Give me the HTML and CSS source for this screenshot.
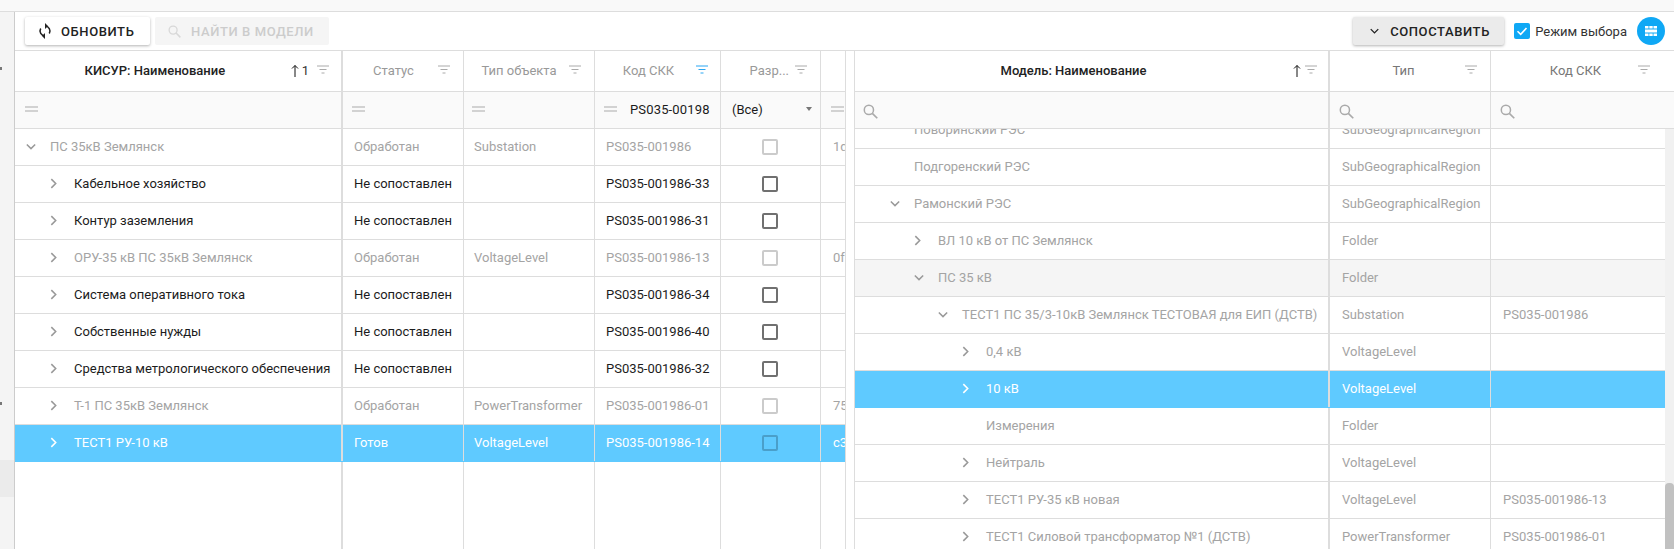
FILE: index.html
```html
<!DOCTYPE html>
<html lang="ru">

<head>
    <meta charset="UTF-8">
    <title>Сопоставление</title>
    <link rel="stylesheet" href="styles.css">
</head>

<body>
    <svg class="sprite" width="0" height="0">
        <symbol id="i-filter" viewBox="0 0 12 10">
            <path d="M0 1h12M2.500 4.500h7M4.500 8h3" fill="none" stroke="currentColor" stroke-width="1"/>
        </symbol>
        <symbol id="i-eq" viewBox="0 0 13 6">
            <path d="M0 1h13M0 5h13" fill="none" stroke="currentColor" stroke-width="1"/>
        </symbol>
        <symbol id="i-search" viewBox="0 0 14 14">
            <circle cx="5.500" cy="5.500" r="4.300" fill="none" stroke="currentColor" stroke-width="1.400"/>
            <path d="M8.700 8.700L13.300 13.300" fill="none" stroke="currentColor" stroke-width="1.600"/>
        </symbol>
        <symbol id="i-right" viewBox="0 0 8 12">
            <path d="M1.500 1L6.500 6L1.500 11" fill="none" stroke="currentColor" stroke-width="1.800"/>
        </symbol>
        <symbol id="i-down" viewBox="0 0 12 8">
            <path d="M1 1.500L6 6.500L11 1.500" fill="none" stroke="currentColor" stroke-width="1.800"/>
        </symbol>
        <symbol id="i-up" viewBox="0 0 8 13">
            <path d="M4 13V1.500M1 4.500L4 1.500L7 4.500" fill="none" stroke="currentColor" stroke-width="1"/>
        </symbol>
    </svg>

    <div class="top-strip"></div>

    <div class="main">
        <div class="side">
            <div class="side-mark first"></div>
            <div class="side-mark second"></div>
            <div class="side-active"></div>
        </div>

        <div class="content">
            <div class="toolbar">
                <button class="btn">
                    <svg class="btn-sync" viewBox="0 0 14 16" width="14" height="16">
                        <path d="M7 3a5 5 0 0 1 4.300 7.500M7 13a5 5 0 0 1-4.300-7.500" fill="none" stroke="#222" stroke-width="1.500"/>
                        <path d="M7 0l3 3-3 3zM7 10l-3 3 3 3z" fill="#222"/>
                    </svg>
                    Обновить
                </button>
                <button class="btn btn-off">
                    <svg class="icon-search" width="13" height="13"><use href="#i-search"/></svg>
                    Найти в модели
                </button>
                <div class="toolbar-right">
                    <button class="btn btn-match">
                        <svg width="9" height="6"><use href="#i-down"/></svg>
                        Сопоставить
                    </button>
                    <span class="check-box">
                        <svg viewBox="0 0 16 16" width="16" height="16">
                            <path d="M3.500 8.200L6.700 11.300L12.500 5" fill="none" stroke="#fff" stroke-width="1.600"/>
                        </svg>
                    </span>
                    <span class="check-label">Режим выбора</span>
                    <span class="round-btn">
                        <svg viewBox="0 0 12 12" width="12" height="12">
                            <path d="M0 1h3.500v2.500H0zM4.300 1h3.400v2.500H4.300zM8.500 1H12v2.500H8.500zM0 4.500h12v3H0zM0 8.500h3.500V11H0zM4.300 8.500h3.400V11H4.300zM8.500 8.500H12V11H8.500z" fill="#fff"/>
                        </svg>
                    </span>
                </div>
            </div>

            <div class="grids">
                <div class="grid grid-left">
                    <div class="row head">
                        <div class="cell c1 thick"><span class="title dark">КИСУР: Наименование</span><svg class="sort" width="8" height="13"><use href="#i-up"/></svg><span class="sort-num">1</span><svg class="flt" width="12" height="10"><use href="#i-filter"/></svg></div>
                        <div class="cell c2"><span class="title">Статус</span><svg class="flt" width="12" height="10"><use href="#i-filter"/></svg></div>
                        <div class="cell c3"><span class="title">Тип объекта</span><svg class="flt" width="12" height="10"><use href="#i-filter"/></svg></div>
                        <div class="cell c4"><span class="title">Код СКК</span><svg class="flt on" width="12" height="10"><use href="#i-filter"/></svg></div>
                        <div class="cell c5"><span class="title short">Разр...</span><svg class="flt" width="12" height="10"><use href="#i-filter"/></svg></div>
                        <div class="cell c6"></div>
                    </div>
                    <div class="row filter">
                        <div class="cell c1 thick"><svg class="eq" width="13" height="6"><use href="#i-eq"/></svg></div>
                        <div class="cell c2"><svg class="eq" width="13" height="6"><use href="#i-eq"/></svg></div>
                        <div class="cell c3"><svg class="eq" width="13" height="6"><use href="#i-eq"/></svg></div>
                        <div class="cell c4"><svg class="eq" width="13" height="6"><use href="#i-eq"/></svg><span class="filter-val">PS035-00198</span></div>
                        <div class="cell c5 sel"><span class="select-val">(Все)</span><span class="caret"></span></div>
                        <div class="cell c6"><svg class="eq" width="13" height="6"><use href="#i-eq"/></svg></div>
                    </div>
                    <div class="row muted">
                        <div class="cell c1 thick"><svg class="chev down" width="10" height="7"><use href="#i-down"/></svg>ПС 35кВ Землянск</div>
                        <div class="cell c2">Обработан</div>
                        <div class="cell c3">Substation</div>
                        <div class="cell c4">PS035-001986</div>
                        <div class="cell c5"><span class="box"></span></div>
                        <div class="cell c6">1d</div>
                    </div>
                    <div class="row">
                        <div class="cell c1 thick lvl-1"><svg class="chev" width="7" height="11"><use href="#i-right"/></svg>Кабельное хозяйство</div>
                        <div class="cell c2">Не сопоставлен</div>
                        <div class="cell c3"></div>
                        <div class="cell c4">PS035-001986-33</div>
                        <div class="cell c5"><span class="box"></span></div>
                        <div class="cell c6"></div>
                    </div>
                    <div class="row">
                        <div class="cell c1 thick lvl-1"><svg class="chev" width="7" height="11"><use href="#i-right"/></svg>Контур заземления</div>
                        <div class="cell c2">Не сопоставлен</div>
                        <div class="cell c3"></div>
                        <div class="cell c4">PS035-001986-31</div>
                        <div class="cell c5"><span class="box"></span></div>
                        <div class="cell c6"></div>
                    </div>
                    <div class="row muted">
                        <div class="cell c1 thick lvl-1"><svg class="chev" width="7" height="11"><use href="#i-right"/></svg>ОРУ-35 кВ ПС 35кВ Землянск</div>
                        <div class="cell c2">Обработан</div>
                        <div class="cell c3">VoltageLevel</div>
                        <div class="cell c4">PS035-001986-13</div>
                        <div class="cell c5"><span class="box"></span></div>
                        <div class="cell c6">0f</div>
                    </div>
                    <div class="row">
                        <div class="cell c1 thick lvl-1"><svg class="chev" width="7" height="11"><use href="#i-right"/></svg>Система оперативного тока</div>
                        <div class="cell c2">Не сопоставлен</div>
                        <div class="cell c3"></div>
                        <div class="cell c4">PS035-001986-34</div>
                        <div class="cell c5"><span class="box"></span></div>
                        <div class="cell c6"></div>
                    </div>
                    <div class="row">
                        <div class="cell c1 thick lvl-1"><svg class="chev" width="7" height="11"><use href="#i-right"/></svg>Собственные нужды</div>
                        <div class="cell c2">Не сопоставлен</div>
                        <div class="cell c3"></div>
                        <div class="cell c4">PS035-001986-40</div>
                        <div class="cell c5"><span class="box"></span></div>
                        <div class="cell c6"></div>
                    </div>
                    <div class="row">
                        <div class="cell c1 thick lvl-1"><svg class="chev" width="7" height="11"><use href="#i-right"/></svg>Средства метрологического обеспечения</div>
                        <div class="cell c2">Не сопоставлен</div>
                        <div class="cell c3"></div>
                        <div class="cell c4">PS035-001986-32</div>
                        <div class="cell c5"><span class="box"></span></div>
                        <div class="cell c6"></div>
                    </div>
                    <div class="row muted">
                        <div class="cell c1 thick lvl-1"><svg class="chev" width="7" height="11"><use href="#i-right"/></svg>Т-1 ПС 35кВ Землянск</div>
                        <div class="cell c2">Обработан</div>
                        <div class="cell c3">PowerTransformer</div>
                        <div class="cell c4">PS035-001986-01</div>
                        <div class="cell c5"><span class="box"></span></div>
                        <div class="cell c6">75</div>
                    </div>
                    <div class="row selected">
                        <div class="cell c1 thick lvl-1"><svg class="chev" width="7" height="11"><use href="#i-right"/></svg>ТЕСТ1 РУ-10 кВ</div>
                        <div class="cell c2">Готов</div>
                        <div class="cell c3">VoltageLevel</div>
                        <div class="cell c4">PS035-001986-14</div>
                        <div class="cell c5"><span class="box"></span></div>
                        <div class="cell c6">c3</div>
                    </div>
                    <div class="row rest">
                        <div class="cell c1 thick"></div>
                        <div class="cell c2"></div>
                        <div class="cell c3"></div>
                        <div class="cell c4"></div>
                        <div class="cell c5"></div>
                        <div class="cell c6"></div>
                    </div>
                </div>

                <div class="grid grid-right">
                    <div class="row head">
                        <div class="cell m1 thick"><span class="title dark">Модель: Наименование</span><svg class="sort" width="8" height="13"><use href="#i-up"/></svg><svg class="flt near" width="12" height="10"><use href="#i-filter"/></svg></div>
                        <div class="cell m2"><span class="title mid">Тип</span><svg class="flt" width="12" height="10"><use href="#i-filter"/></svg></div>
                        <div class="cell m3"><span class="title mid">Код СКК</span><svg class="flt" width="12" height="10"><use href="#i-filter"/></svg></div>
                    </div>
                    <div class="row filter">
                        <div class="cell m1 thick"><svg class="srch" width="15" height="15"><use href="#i-search"/></svg></div>
                        <div class="cell m2"><svg class="srch" width="15" height="15"><use href="#i-search"/></svg></div>
                        <div class="cell m3"><svg class="srch" width="15" height="15"><use href="#i-search"/></svg></div>
                    </div>
                    <div class="scroll-area">
                        <div class="scroll-rows">
                            <div class="row muted scrolled">
                                <div class="cell m1 thick lvl-1"><span class="chev-gap"></span>Поворинский РЭС</div>
                                <div class="cell m2">SubGeographicalRegion</div>
                                <div class="cell m3"></div>
                            </div>
                            <div class="row muted">
                                <div class="cell m1 thick lvl-1"><span class="chev-gap"></span>Подгоренский РЭС</div>
                                <div class="cell m2">SubGeographicalRegion</div>
                                <div class="cell m3"></div>
                            </div>
                            <div class="row muted">
                                <div class="cell m1 thick lvl-1"><svg class="chev down" width="10" height="7"><use href="#i-down"/></svg>Рамонский РЭС</div>
                                <div class="cell m2">SubGeographicalRegion</div>
                                <div class="cell m3"></div>
                            </div>
                            <div class="row muted">
                                <div class="cell m1 thick lvl-2"><svg class="chev" width="7" height="11"><use href="#i-right"/></svg>ВЛ 10 кВ от ПС Землянск</div>
                                <div class="cell m2">Folder</div>
                                <div class="cell m3"></div>
                            </div>
                            <div class="row muted hovered">
                                <div class="cell m1 thick lvl-2"><svg class="chev down" width="10" height="7"><use href="#i-down"/></svg>ПС 35 кВ</div>
                                <div class="cell m2">Folder</div>
                                <div class="cell m3"></div>
                            </div>
                            <div class="row muted">
                                <div class="cell m1 thick lvl-3"><svg class="chev down" width="10" height="7"><use href="#i-down"/></svg>ТЕСТ1 ПС 35/3-10кВ Землянск ТЕСТОВАЯ для ЕИП (ДСТВ)</div>
                                <div class="cell m2">Substation</div>
                                <div class="cell m3">PS035-001986</div>
                            </div>
                            <div class="row muted">
                                <div class="cell m1 thick lvl-4"><svg class="chev" width="7" height="11"><use href="#i-right"/></svg>0,4 кВ</div>
                                <div class="cell m2">VoltageLevel</div>
                                <div class="cell m3"></div>
                            </div>
                            <div class="row selected">
                                <div class="cell m1 thick lvl-4"><svg class="chev" width="7" height="11"><use href="#i-right"/></svg>10 кВ</div>
                                <div class="cell m2">VoltageLevel</div>
                                <div class="cell m3"></div>
                            </div>
                            <div class="row muted">
                                <div class="cell m1 thick lvl-4"><span class="chev-gap"></span>Измерения</div>
                                <div class="cell m2">Folder</div>
                                <div class="cell m3"></div>
                            </div>
                            <div class="row muted">
                                <div class="cell m1 thick lvl-4"><svg class="chev" width="7" height="11"><use href="#i-right"/></svg>Нейтраль</div>
                                <div class="cell m2">VoltageLevel</div>
                                <div class="cell m3"></div>
                            </div>
                            <div class="row muted">
                                <div class="cell m1 thick lvl-4"><svg class="chev" width="7" height="11"><use href="#i-right"/></svg>ТЕСТ1 РУ-35 кВ новая</div>
                                <div class="cell m2">VoltageLevel</div>
                                <div class="cell m3">PS035-001986-13</div>
                            </div>
                            <div class="row muted">
                                <div class="cell m1 thick lvl-4"><svg class="chev" width="7" height="11"><use href="#i-right"/></svg>ТЕСТ1 Силовой трансформатор №1 (ДСТВ)</div>
                                <div class="cell m2">PowerTransformer</div>
                                <div class="cell m3">PS035-001986-01</div>
                            </div>
                        </div>
                        <div class="scrollbar"><div class="thumb"></div></div>
                    </div>
                </div>
            </div>
        </div>
    </div>
</body>

</html>
```

FILE: styles.css
```css
/* General Reset */
* {
    margin: 0;
    padding: 0;
    box-sizing: border-box;
}

html,
body {
    height: 100%;
    overflow: hidden;
}

body {
    display: flex;
    flex-direction: column;
    background-color: #fff;
    color: #1c1c1c;
    font-family: Roboto, sans-serif;
    font-size: 13px;
}

.sprite {
    display: block;
    height: 0;
}

.top-strip {
    height: 12px;
    flex: none;
    background-color: #f9f9f9;
    border-bottom: 1px solid #ddd;
}

.main {
    flex: 1;
    display: flex;
    min-height: 0;
}

/* Left strip */
.side {
    width: 15px;
    flex: none;
    background-color: #f4f4f4;
    border-right: 1px solid #ccc;
}

.side-mark {
    width: 2px;
    height: 3px;
    background-color: #777;
}

.side-mark.first {
    margin-top: 55px;
}

.side-mark.second {
    margin-top: 332px;
}

.side-active {
    height: 37px;
    margin-top: 55px;
    background-color: #ebebeb;
}

.content {
    flex: 1;
    display: flex;
    flex-direction: column;
    min-width: 0;
}

/* Toolbar */
.toolbar {
    height: 38px;
    flex: none;
    display: flex;
    align-items: flex-start;
    gap: 5px;
    padding: 5px 9px 0 10px;
}

.toolbar-right {
    margin-left: auto;
    display: flex;
    align-items: center;
}

.btn {
    height: 28px;
    display: flex;
    align-items: center;
    border: none;
    border-radius: 2px;
    background-color: #fff;
    color: #222;
    font-family: Roboto, sans-serif;
    font-size: 13px;
    font-weight: 500;
    letter-spacing: 0.6px;
    text-transform: uppercase;
    box-shadow: 0 1px 3px rgba(0, 0, 0, 0.3);
    width: 125px;
    padding-left: 13px;
}

.btn-sync {
    margin-right: 9px;
}

.btn-off {
    width: 174px;
    padding-left: 13px;
    background-color: #f5f5f5;
    color: #ccc;
    box-shadow: none;
}

.icon-search {
    margin-right: 10px;
    color: #d8d8d8;
}

.btn-match {
    width: 151px;
    padding-left: 17px;
    background-color: #ebebeb;
}

.btn-match svg {
    margin-right: 11px;
    color: #222;
}

.check-box {
    width: 16px;
    height: 16px;
    margin-left: 10px;
    border-radius: 2px;
    background-color: #0fa8f5;
}

.check-box svg {
    display: block;
}

.check-label {
    margin-left: 5px;
    color: #333;
}

.round-btn {
    width: 28px;
    height: 28px;
    margin-left: 10px;
    border-radius: 50%;
    background-color: #0fa8f5;
    display: flex;
    align-items: center;
    justify-content: center;
}

/* Grids */
.grids {
    flex: 1;
    display: flex;
    min-height: 0;
    border-top: 1px solid #ddd;
}

.grid {
    display: flex;
    flex-direction: column;
    overflow: hidden;
}

.grid-left {
    width: 831px;
    flex: none;
    border-right: 1px solid #ddd;
    margin-right: 8px;
}

.grid-right {
    flex: 1;
    min-width: 0;
    border-left: 1px solid #ddd;
}

.row {
    display: flex;
    height: 37px;
    flex: none;
    border-bottom: 1px solid #ddd;
}

.row.head {
    height: 41px;
}

.row.filter {
    background-color: #fafafa;
}

.row.rest {
    flex: 1;
    border-bottom: none;
}

.cell {
    flex: none;
    display: flex;
    align-items: center;
    height: 100%;
    padding: 0 11px 2px 12px;
    border-right: 1px solid #ddd;
    white-space: nowrap;
    overflow: hidden;
}

.cell.thick {
    border-right-width: 2px;
}

.c1 { width: 328px; padding-left: 11px; padding-right: 12px; }
.c2 { width: 121px; padding-left: 11px; padding-right: 13px; }
.c3 { width: 131px; padding-left: 10px; padding-right: 13px; }
.c4 { width: 126px; padding-left: 11px; padding-right: 12px; }
.c5 { width: 100px; padding-left: 11px; padding-right: 13px; }
.c5.sel { padding-right: 11px; }
.c6 { width: 24px; border-right: none; }

.m1 { width: 475px; padding-left: 11px; }
.m2 { width: 161px; padding-left: 12px; padding-right: 13px; }
.m3 { width: 174px; border-right: none; padding-left: 12px; padding-right: 15px; }

.row.muted .cell {
    color: #a4a4a4;
}

.row.hovered {
    background-color: #f5f5f5;
}

.row.selected {
    background-color: #5fcaff;
    border-bottom-color: #5fcaff;
}

.row.selected .cell {
    color: #fff;
}

/* Header cells */
.title {
    flex: 1;
    text-align: center;
    color: #999;
    padding-right: 5px;
}

.title.dark {
    color: #222;
    font-weight: 500;
}

.m1 .title {
    padding-right: 10px;
}

.m2 .title {
    padding-right: 0;
}

.m3 .title {
    padding-right: 0;
    padding-left: 10px;
}

.title.mid {
    color: #777;
}

.title.short {
    text-align: right;
    padding-right: 6px;
}

.sort {
    color: #111;
    flex: none;
    margin-left: 2px;
}

.sort-num {
    margin: 0 8px 0 3px;
    color: #333;
}

.flt {
    color: #aaa;
    flex: none;
}

.flt.near {
    margin-left: 4px;
}

.flt.on {
    color: #2ba6f2;
}

/* Filter cells */
.eq {
    color: #aaa;
    flex: none;
    margin-left: -2px;
}

.c1 .eq {
    margin-left: -1px;
}

.srch {
    color: #aaa;
    flex: none;
    margin-left: -3px;
    margin-top: 4px;
}

.filter-val {
    margin-left: 13px;
    letter-spacing: 0.15px;
}

.select-val {
    flex: 1;
}

.caret {
    width: 0;
    height: 0;
    margin-right: -3px;
    border-left: 3.500px solid transparent;
    border-right: 3.500px solid transparent;
    border-top: 4px solid #777;
}

/* Tree column */
.chev {
    flex: none;
    color: #999;
    margin-right: 17px;
}

.chev.down {
    margin-right: 14px;
}

.chev-gap {
    flex: none;
    width: 24px;
}

.row.selected .chev {
    color: #fff;
}

.lvl-1 { padding-left: 35px; }
.lvl-2 { padding-left: 59px; }
.lvl-3 { padding-left: 83px; }
.lvl-4 { padding-left: 107px; }

/* Checkbox cell */
.box {
    width: 16px;
    height: 16px;
    margin: 2px 0 0 30px;
    border: 2px solid #707070;
    border-radius: 2px;
}

.row.muted .box {
    border-color: #cbcbcb;
}

.row.selected .box {
    border-color: #4a9fca;
}

/* Right grid body with its scrollbar */
.scroll-area {
    flex: 1;
    display: flex;
    min-height: 0;
    overflow: hidden;
}

.scroll-rows {
    width: 810px;
    flex: none;
}

.scrolled {
    margin-top: -17px;
}

.scrollbar {
    flex: 1;
    background-color: #f1f1f1;
    padding-top: 354px;
}

.thumb {
    height: 100%;
    border-radius: 4px 4px 0 0;
    background-color: #c1c1c1;
}
```
